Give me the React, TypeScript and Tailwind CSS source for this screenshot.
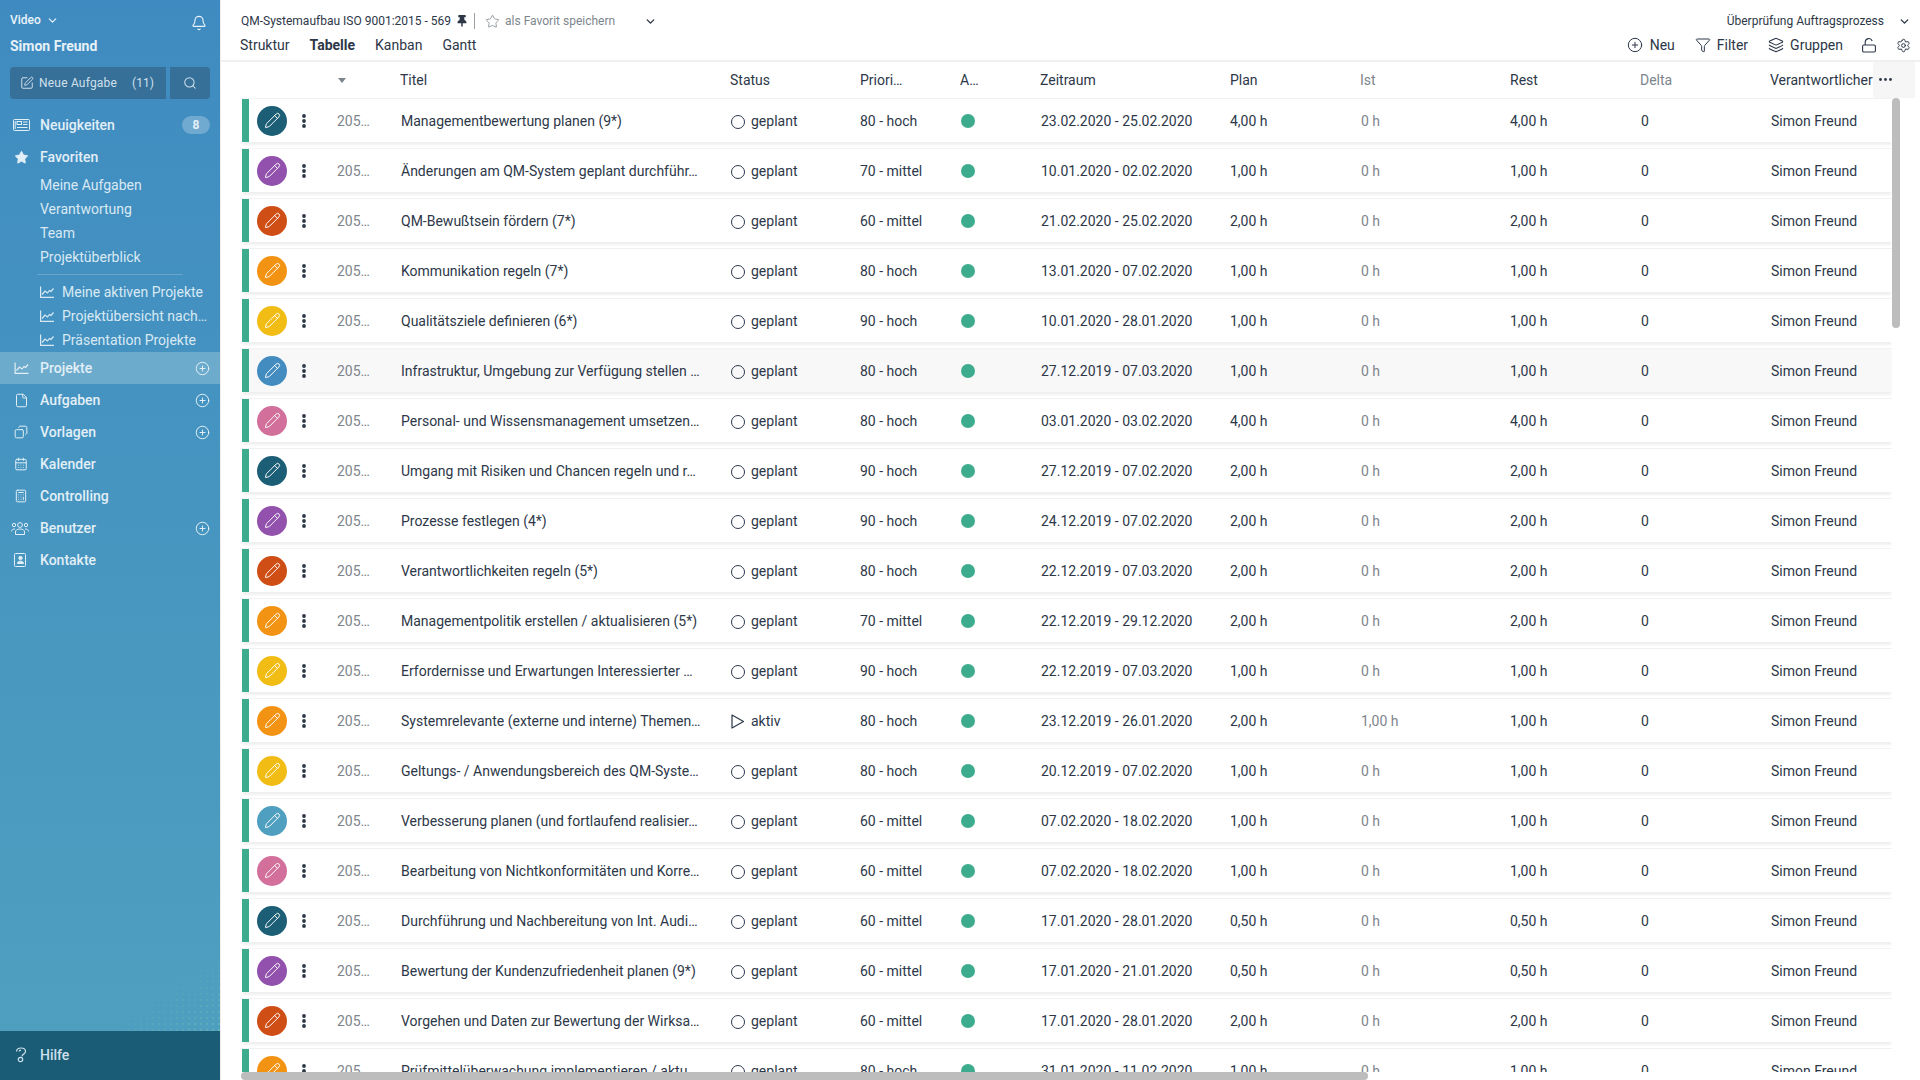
import React from 'react'
import {
  Bell, Calculator, CalendarDays, ChevronDown, CirclePlus, Copy, File, Funnel, Layers, Pencil, Search, Settings, SquarePen, Star,
} from 'lucide-react'
import { FaThumbtack } from 'react-icons/fa'

type Task = {
  color: string
  title: string
  status?: string
  prio: string
  range: string
  plan: string
  ist?: string
  rest?: string
}

const tasks: Task[] = [
  { color: 'bg-[#1b5e75]', title: 'Managementbewertung planen (9*)', prio: '80 - hoch', range: '23.02.2020 - 25.02.2020', plan: '4,00 h' },
  { color: 'bg-[#9251ac]', title: 'Änderungen am QM-System geplant durchführ…', prio: '70 - mittel', range: '10.01.2020 - 02.02.2020', plan: '1,00 h' },
  { color: 'bg-[#cf4e15]', title: 'QM-Bewußtsein fördern (7*)', prio: '60 - mittel', range: '21.02.2020 - 25.02.2020', plan: '2,00 h' },
  { color: 'bg-[#f39313]', title: 'Kommunikation regeln (7*)', prio: '80 - hoch', range: '13.01.2020 - 07.02.2020', plan: '1,00 h' },
  { color: 'bg-[#f1bd14]', title: 'Qualitätsziele definieren (6*)', prio: '90 - hoch', range: '10.01.2020 - 28.01.2020', plan: '1,00 h' },
  { color: 'bg-[#438cc0]', title: 'Infrastruktur, Umgebung zur Verfügung stellen …', prio: '80 - hoch', range: '27.12.2019 - 07.03.2020', plan: '1,00 h' },
  { color: 'bg-[#d26f9b]', title: 'Personal- und Wissensmanagement umsetzen…', prio: '80 - hoch', range: '03.01.2020 - 03.02.2020', plan: '4,00 h' },
  { color: 'bg-[#1b5e75]', title: 'Umgang mit Risiken und Chancen regeln und r…', prio: '90 - hoch', range: '27.12.2019 - 07.02.2020', plan: '2,00 h' },
  { color: 'bg-[#9251ac]', title: 'Prozesse festlegen (4*)', prio: '90 - hoch', range: '24.12.2019 - 07.02.2020', plan: '2,00 h' },
  { color: 'bg-[#cf4e15]', title: 'Verantwortlichkeiten regeln (5*)', prio: '80 - hoch', range: '22.12.2019 - 07.03.2020', plan: '2,00 h' },
  { color: 'bg-[#f39313]', title: 'Managementpolitik erstellen / aktualisieren (5*)', prio: '70 - mittel', range: '22.12.2019 - 29.12.2020', plan: '2,00 h' },
  { color: 'bg-[#f1bd14]', title: 'Erfordernisse und Erwartungen Interessierter …', prio: '90 - hoch', range: '22.12.2019 - 07.03.2020', plan: '1,00 h' },
  { color: 'bg-[#f39313]', title: 'Systemrelevante (externe und interne) Themen…', status: 'aktiv', prio: '80 - hoch', range: '23.12.2019 - 26.01.2020', plan: '2,00 h', ist: '1,00 h', rest: '1,00 h' },
  { color: 'bg-[#f1bd14]', title: 'Geltungs- / Anwendungsbereich des QM-Syste…', prio: '80 - hoch', range: '20.12.2019 - 07.02.2020', plan: '1,00 h' },
  { color: 'bg-[#4fa0c0]', title: 'Verbesserung planen (und fortlaufend realisier…', prio: '60 - mittel', range: '07.02.2020 - 18.02.2020', plan: '1,00 h' },
  { color: 'bg-[#d26f9b]', title: 'Bearbeitung von Nichtkonformitäten und Korre…', prio: '60 - mittel', range: '07.02.2020 - 18.02.2020', plan: '1,00 h' },
  { color: 'bg-[#1b5e75]', title: 'Durchführung und Nachbereitung von Int. Audi…', prio: '60 - mittel', range: '17.01.2020 - 28.01.2020', plan: '0,50 h' },
  { color: 'bg-[#9251ac]', title: 'Bewertung der Kundenzufriedenheit planen (9*)', prio: '60 - mittel', range: '17.01.2020 - 21.01.2020', plan: '0,50 h' },
  { color: 'bg-[#cf4e15]', title: 'Vorgehen und Daten zur Bewertung der Wirksa…', prio: '60 - mittel', range: '17.01.2020 - 28.01.2020', plan: '2,00 h' },
  { color: 'bg-[#f39313]', title: 'Prüfmittelüberwachung implementieren / aktu…', prio: '80 - hoch', range: '31.01.2020 - 11.02.2020', plan: '1,00 h' },
]

const gridCols = 'grid grid-cols-[95px_64px_329px_130px_101px_80px_189px_131px_149px_131px_129px_122px] items-center'

function NewsIcon() {
  return (
    <svg width="17" height="12" viewBox="0 0 17 12" fill="none" stroke="currentColor" strokeWidth="1">
      <rect x="0.5" y="0.5" width="16" height="11" rx="1" />
      <rect x="4" y="2.5" width="4.5" height="3" />
      <path d="M10 3h4.5M10 5.5h4.5M4 8.5h10.5" />
      <path d="M2.2 2v8" />
    </svg>
  )
}

function ChartIcon({ w = 14 }: { w?: number }) {
  return (
    <svg width={w} height="12" viewBox="0 0 14 12" fill="none" stroke="currentColor" strokeWidth="1.2">
      <path d="M.6 .5V11.4H14" />
      <path d="M2 8.5 5 5l2.5 2L9.5 4.5l1.5 1L13.5 2.5" />
    </svg>
  )
}

function UsersIcon() {
  return (
    <svg width="18" height="13" viewBox="0 0 18 13" fill="none" stroke="currentColor" strokeWidth="1">
      <circle cx="9" cy="3" r="2.4" />
      <circle cx="3" cy="3" r="1.7" />
      <circle cx="15" cy="3" r="1.7" />
      <path d="M4.5 12.5V10c0-2 1.8-3 4.5-3s4.5 1 4.5 3v2.5z" />
      <path d="M.5 9.5c0-1.5 1-2.5 3.5-2.5M17.5 9.5c0-1.5-1-2.5-3.5-2.5" />
    </svg>
  )
}

function ContactIcon() {
  return (
    <svg width="12" height="14" viewBox="0 0 12 14" fill="none" stroke="currentColor" strokeWidth="1">
      <rect x="0.5" y="0.5" width="11" height="13" rx="1" />
      <circle cx="6.5" cy="5" r="1.7" fill="currentColor" />
      <path d="M3.5 10.5c0-1.6 1.2-2.3 3-2.3s3 .7 3 2.3z" fill="currentColor" />
    </svg>
  )
}

function HelpIcon() {
  return (
    <svg width="12" height="16" viewBox="0 0 12 16" fill="none" stroke="currentColor" strokeWidth="1.2">
      <path d="M1.5 4.5C1.5 2.2 3.4 1 6 1s4.5 1.4 4.5 3.4c0 2.4-3 2.6-3.6 5" />
      <path d="M4.2 4.6c0-.9.8-1.4 1.8-1.4" />
      <circle cx="5.5" cy="12.5" r="2.2" />
    </svg>
  )
}

function OpenLock() {
  return (
    <svg width="14" height="15" viewBox="0 0 14 15" fill="none" stroke="currentColor" strokeWidth="1.1">
      <rect x="0.6" y="7" width="12.8" height="7" rx="1.2" />
      <path d="M3.2 7V4a3.6 3.6 0 0 1 7 -1" />
    </svg>
  )
}

function NavItem({ icon, label, plus, active, left = 'pl-[14px]', iconWidth = 'w-[26px]' }: { icon: React.ReactNode; label: string; plus?: boolean; active?: boolean; left?: string; iconWidth?: string }) {
  return (
    <div className={`flex h-8 items-center pr-[10px] ${left} ${active ? 'bg-[#6dabcd]' : ''}`}>
      <span className={`flex justify-start text-[#e2eff6] ${iconWidth}`}>{icon}</span>
      <span className="flex-1 text-sm font-medium text-[#e2eff6]">{label}</span>
      {plus && <CirclePlus size={15} strokeWidth={1.6} className="text-[#e2eff6]" />}
    </div>
  )
}

function SubItem({ label }: { label: string }) {
  return <div className="flex h-6 items-center pl-10 text-sm text-[#d9e9f3]">{label}</div>
}

function ChartItem({ label }: { label: string }) {
  return (
    <div className="flex h-6 items-center pl-10 text-sm text-[#d9e9f3]">
      <span className="mr-2 flex"><ChartIcon /></span>
      <span>{label}</span>
    </div>
  )
}

function Sidebar() {
  return (
    <aside className="relative flex h-full w-[220px] shrink-0 flex-col bg-gradient-to-b from-[#3f8bc1] to-[#4fa0bf]">
      <div className="relative h-[67px] pl-[10px] pr-[10px] pt-3">
        <div className="flex h-4 items-center text-xs font-medium text-[#eaf3f8]">
          Video
          <ChevronDown size={13} strokeWidth={2.2} className="ml-[5px]" />
        </div>
        <div className="mt-[8px] text-sm font-bold text-[#e6f1f7]">Simon Freund</div>
        <Bell size={16} strokeWidth={1.7} className="absolute right-[13px] top-[15px] text-[#eaf3f8]" />
      </div>
      <div className="flex h-8 gap-1 px-[10px]">
        <div className="flex w-[156px] items-center rounded-l bg-[#366f98] pl-[10px] text-xs text-[#cfe0ec]">
          <SquarePen size={14} strokeWidth={1.7} className="mr-[5px]" />
          <span className="tracking-[0.2px]">Neue Aufgabe</span>
          <span className="ml-[15px]">(11)</span>
        </div>
        <div className="flex w-10 items-center justify-center rounded-r bg-[#366f98] text-[#cfe0ec]">
          <Search size={14} strokeWidth={1.8} />
        </div>
      </div>
      <div className="mt-[10px]">
        <div className="flex h-8 items-center pl-[13px] pr-[10px]">
          <span className="flex w-[27px] text-[#e2eff6]"><NewsIcon /></span>
          <span className="flex-1 text-sm font-medium text-[#e2eff6]">Neuigkeiten</span>
          <span className="flex h-[18px] w-7 items-center justify-center rounded-full bg-white/25 text-xs font-bold text-[#e6f1f7]">8</span>
        </div>
        <div className="flex h-8 items-center pl-[14px]">
          <Star size={15} strokeWidth={1} className="mr-[11px] fill-[#e2eff6] text-[#e2eff6]" />
          <span className="text-sm font-medium text-[#e2eff6]">Favoriten</span>
        </div>
        <SubItem label="Meine Aufgaben" />
        <SubItem label="Verantwortung" />
        <SubItem label="Team" />
        <SubItem label="Projektüberblick" />
        <div className="mx-[37px] my-[5px] h-px bg-white/20" />
        <ChartItem label="Meine aktiven Projekte" />
        <ChartItem label="Projektübersicht nach…" />
        <ChartItem label="Präsentation Projekte" />
        <NavItem active plus label="Projekte" icon={<ChartIcon w={15} />} />
        <NavItem plus label="Aufgaben" icon={<File size={15} strokeWidth={1.6} />} />
        <NavItem plus label="Vorlagen" icon={<Copy size={14} strokeWidth={1.7} className="-scale-x-100" />} />
        <NavItem label="Kalender" icon={<CalendarDays size={14} strokeWidth={1.7} />} />
        <NavItem label="Controlling" icon={<Calculator size={14} strokeWidth={1.7} />} />
        <NavItem plus left="pl-[11px]" iconWidth="w-[29px]" label="Benutzer" icon={<UsersIcon />} />
        <NavItem label="Kontakte" icon={<ContactIcon />} />
      </div>
      <div className="absolute bottom-[49px] right-0 h-[70px] w-[100px] bg-[radial-gradient(#86cfa8_0.6px,transparent_0.9px)] bg-[length:6px_6px] opacity-50 [mask-image:linear-gradient(to_top_left,black,transparent_65%)]" />
      <div className="relative mt-auto flex h-[49px] items-center bg-[#1a5c75] pb-[2px] pl-[15px] text-sm font-medium text-[#cfe0ec]">
        <span className="mr-[13px] flex w-3"><HelpIcon /></span>
        Hilfe
      </div>
    </aside>
  )
}

function Toolbar() {
  return (
    <div className="h-[62px] shrink-0 border-b-2 border-[#f0f0f0] pl-5 pr-[9px]">
      <div className="flex h-[42px] items-center text-xs text-[#2d3748]">
        <span>QM-Systemaufbau ISO 9001:2015 - 569</span>
        <FaThumbtack size={12} className="ml-[5px]" />
        <span className="ml-[6px] h-4 w-px bg-[#9aa0a6]" />
        <Star size={15} strokeWidth={1.4} className="ml-[10px] text-[#8a9097]" />
        <span className="ml-[5px] text-[#7d858c]">als Favorit speichern</span>
        <ChevronDown size={13} strokeWidth={2.6} className="ml-[29px]" />
        <span className="ml-auto">Überprüfung Auftragsprozess</span>
        <ChevronDown size={13} strokeWidth={2.6} className="ml-[14px]" />
      </div>
      <div className="-mt-[7px] flex h-5 items-center text-sm text-[#2d3748]">
        <span className="-ml-px">Struktur</span>
        <span className="ml-5 font-bold">Tabelle</span>
        <span className="ml-5">Kanban</span>
        <span className="ml-5">Gantt</span>
        <span className="ml-auto flex items-center">
          <CirclePlus size={16} strokeWidth={1.5} className="mr-[7px]" />
          Neu
        </span>
        <span className="ml-[20px] flex items-center">
          <Funnel size={16} strokeWidth={1.5} className="mr-[6px]" />
          Filter
        </span>
        <span className="ml-5 flex items-center">
          <Layers size={16} strokeWidth={1.6} className="mr-[6px]" />
          Gruppen
        </span>
        <span className="ml-[19px]"><OpenLock /></span>
        <Settings size={15} strokeWidth={1.6} className="ml-5" />
      </div>
    </div>
  )
}

function TableHeader() {
  return (
    <div className={`relative h-9 shrink-0 pl-[21px] text-sm text-[#2d3748] ${gridCols}`}>
      <span />
      <span className="ml-[1px] h-0 w-0 border-x-4 border-t-[5px] border-x-transparent border-t-[#7d858c]" />
      <span className="-ml-px">Titel</span>
      <span>Status</span>
      <span>Priori…</span>
      <span className="-ml-px">A…</span>
      <span className="-ml-px">Zeitraum</span>
      <span>Plan</span>
      <span className="-ml-px text-[#7d858c]">Ist</span>
      <span>Rest</span>
      <span className="-ml-px text-[#7d858c]">Delta</span>
      <span>Verantwortlicher</span>
      <div className="absolute right-[5px] top-0 flex h-9 w-[42px] items-start justify-start bg-[#f6f6f6] pl-[6px] pt-[16px]">
        <svg width="13" height="3" viewBox="0 0 13 3" fill="#2d3748">
          <circle cx="1.5" cy="1.5" r="1.4" />
          <circle cx="6.5" cy="1.5" r="1.4" />
          <circle cx="11.5" cy="1.5" r="1.4" />
        </svg>
      </div>
    </div>
  )
}

function TaskRow({ task, hover }: { task: Task; hover: boolean }) {
  const active = task.status === 'aktiv'
  return (
    <div className="h-[50px] shrink-0 pt-px">
      <div className={`h-[43px] w-[1650px] text-sm text-[#2d3748] shadow-[0_4px_2px_-1px_#f0f0f0,0_-1px_0_#f2f2f2] ${hover ? 'bg-[#f8f8f8]' : 'bg-white'} ${gridCols}`}>
        <div className="flex h-full items-center">
          <span className="h-full w-[7px] bg-[#3dab8e]" />
          <span className={`ml-2 flex h-[30px] w-[30px] items-center justify-center rounded-full ${task.color}`}>
            <Pencil size={17} strokeWidth={1.35} className="text-white" />
          </span>
          <svg width="4" height="14" viewBox="0 0 4 14" fill="#2d3748" className="ml-[15px]">
            <circle cx="2" cy="2" r="1.9" />
            <circle cx="2" cy="7" r="1.9" />
            <circle cx="2" cy="12" r="1.9" />
          </svg>
        </div>
        <span className="text-[#7d858c]">205…</span>
        <span className="whitespace-nowrap">{task.title}</span>
        <span className="flex items-center">
          {active ? (
            <svg width="14" height="15" viewBox="0 0 14 15" fill="none" stroke="#2d3748" strokeWidth="1.2" strokeLinejoin="round" className="ml-px mr-[6px] translate-y-px">
              <path d="M1 1 12.5 7.5 1 14z" />
            </svg>
          ) : (
            <span className="ml-px mr-[6px] h-[14px] w-[14px] translate-y-px rounded-full border-[1.3px] border-[#2d3748]" />
          )}
          {active ? 'aktiv' : 'geplant'}
        </span>
        <span>{task.prio}</span>
        <span className="h-[14px] w-[14px] rounded-full bg-[#3dab8e]" />
        <span>{task.range}</span>
        <span>{task.plan}</span>
        <span className="text-[#7d858c]">{task.ist ?? '0 h'}</span>
        <span>{task.rest ?? task.plan}</span>
        <span>0</span>
        <span className="ml-px">Simon Freund</span>
      </div>
    </div>
  )
}

export default function App() {
  return (
    <div className="flex h-screen w-full overflow-hidden bg-white font-['Roboto',sans-serif]">
      <Sidebar />
      <main className="relative flex min-w-0 flex-1 flex-col border-l border-[#eeeeee]">
        <Toolbar />
        <TableHeader />
        <div className="mb-2 ml-[21px] flex min-h-0 flex-1 flex-col overflow-hidden">
          {tasks.map((task, i) => (
            <TaskRow key={i} task={task} hover={i === 5} />
          ))}
        </div>
        <div className="absolute bottom-0 left-5 h-2 w-[1127px] rounded-full bg-[#bdbdbd]" />
        <div className="absolute right-5 top-[98px] h-[230px] w-2 rounded-full bg-[#bdbdbd]" />
      </main>
    </div>
  )
}
